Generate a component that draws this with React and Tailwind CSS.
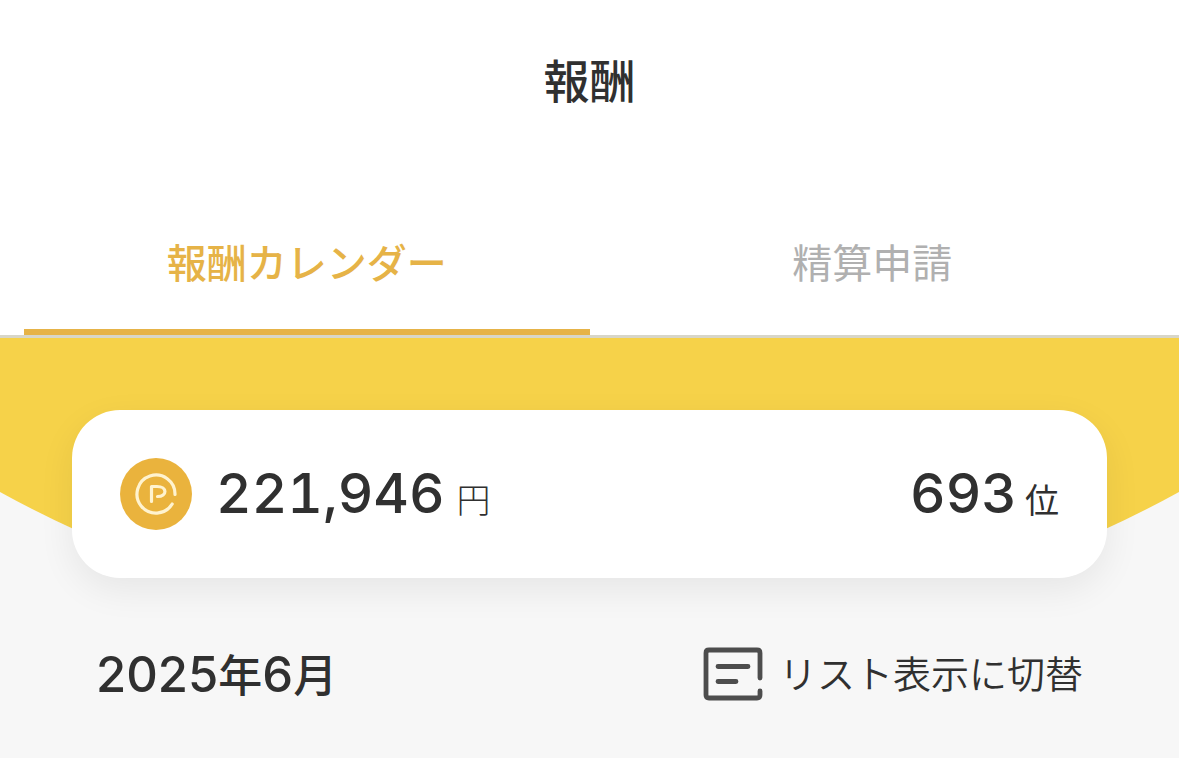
import React, { useState } from "react";

const TABS = [
  { id: "calendar", label: "報酬カレンダー" },
  { id: "settlement", label: "精算申請" },
];

function PointIcon() {
  return (
    <svg viewBox="0 0 72 72" className="w-[72px] h-[72px] shrink-0" fill="none" aria-hidden="true">
      <circle cx="36" cy="36" r="36" fill="#eab33d" />
      <g stroke="#fff3cf" strokeLinecap="round" strokeLinejoin="round">
        <path d="M55 36.5 A19 19 0 1 0 52.2 46" strokeWidth="3.2" />
        <path d="M31.5 43.5 V28.5 H37 C47.5 28.5 47.5 38.5 37.5 38.5" strokeWidth="3.2" />
      </g>
    </svg>
  );
}

function ListIcon() {
  return (
    <svg
      viewBox="0 0 60 54"
      className="w-[60px] h-[54px] shrink-0"
      fill="none"
      stroke="#4d4d4d"
      strokeWidth="4.8"
      strokeLinecap="round"
      strokeLinejoin="round"
      aria-hidden="true"
    >
      <path d="M57 31 V6 Q57 3 54 3 H6 Q3 3 3 6 V48 Q3 51 6 51 H54 Q57 51 57 48 V44" />
      <path d="M15 19.5 H45 M15 34.5 H33" />
    </svg>
  );
}

function CurvedBackground() {
  return (
    <svg
      viewBox="0 0 1179 236"
      preserveAspectRatio="none"
      className="absolute inset-x-0 top-0 w-full h-[236px]"
      aria-hidden="true"
    >
      <path
        d="M0 0 H1179 V154 Q1141 175 1099 194 Q980 236 589 236 Q200 236 80 194 Q38 175 0 154 Z"
        fill="#f6d249"
      />
    </svg>
  );
}

export default function RewardPage() {
  const [activeTab, setActiveTab] = useState("calendar");

  return (
    <div className="min-h-screen bg-[#f7f7f7] text-[#303030] font-['Noto_Sans_CJK_JP',sans-serif]">
      <header className="bg-white border-b-3 border-[#d8d6c8]">
        <h1 className="pt-[46px] text-center text-[46px] leading-16 font-medium">報酬</h1>
        <nav className="mt-20 px-6 flex" role="tablist">
          {TABS.map((tab) => (
            <button
              key={tab.id}
              type="button"
              role="tab"
              aria-selected={activeTab === tab.id}
              onClick={() => setActiveTab(tab.id)}
              className={`flex-1 pt-[41px] pb-[38px] text-[40px] leading-15 border-b-6 cursor-pointer ${
                activeTab === tab.id
                  ? "border-[#e6b347] text-[#e6b347] font-medium"
                  : "border-transparent text-[#b0b0b0]"
              }`}
            >
              {tab.label}
            </button>
          ))}
        </nav>
      </header>

      <main className="relative px-[72px] pt-[72px] pb-12">
        <CurvedBackground />

        <section className="relative flex items-center justify-between rounded-[48px] bg-white px-12 h-42 shadow-[0_12px_36px_rgba(0,0,0,0.07)]">
          <div className="flex items-center gap-6">
            <PointIcon />
            <p className="pt-1 flex items-baseline gap-3 leading-18">
              <span className="text-[55px] font-medium tabular-nums font-['Inter',sans-serif]">221,946</span>
              <span className="text-[34px] font-light">円</span>
            </p>
          </div>
          <p className="pt-1 flex items-baseline gap-2 leading-18">
            <span className="text-[55px] font-medium tabular-nums font-['Inter',sans-serif]">693</span>
            <span className="text-[34px]">位</span>
          </p>
        </section>

        <div className="relative mt-[62px] px-6 flex items-center justify-between">
          <h2 className="text-[44px] leading-16 font-medium">
            <span className="text-[49px] font-['Inter',sans-serif]">2025</span>年
            <span className="text-[49px] font-['Inter',sans-serif]">6</span>月
          </h2>
          <button type="button" className="flex items-center gap-4 text-[38px] leading-16 font-[350] cursor-pointer">
            <ListIcon />
            <span className="pb-1">リスト表示に切替</span>
          </button>
        </div>
      </main>
    </div>
  );
}
